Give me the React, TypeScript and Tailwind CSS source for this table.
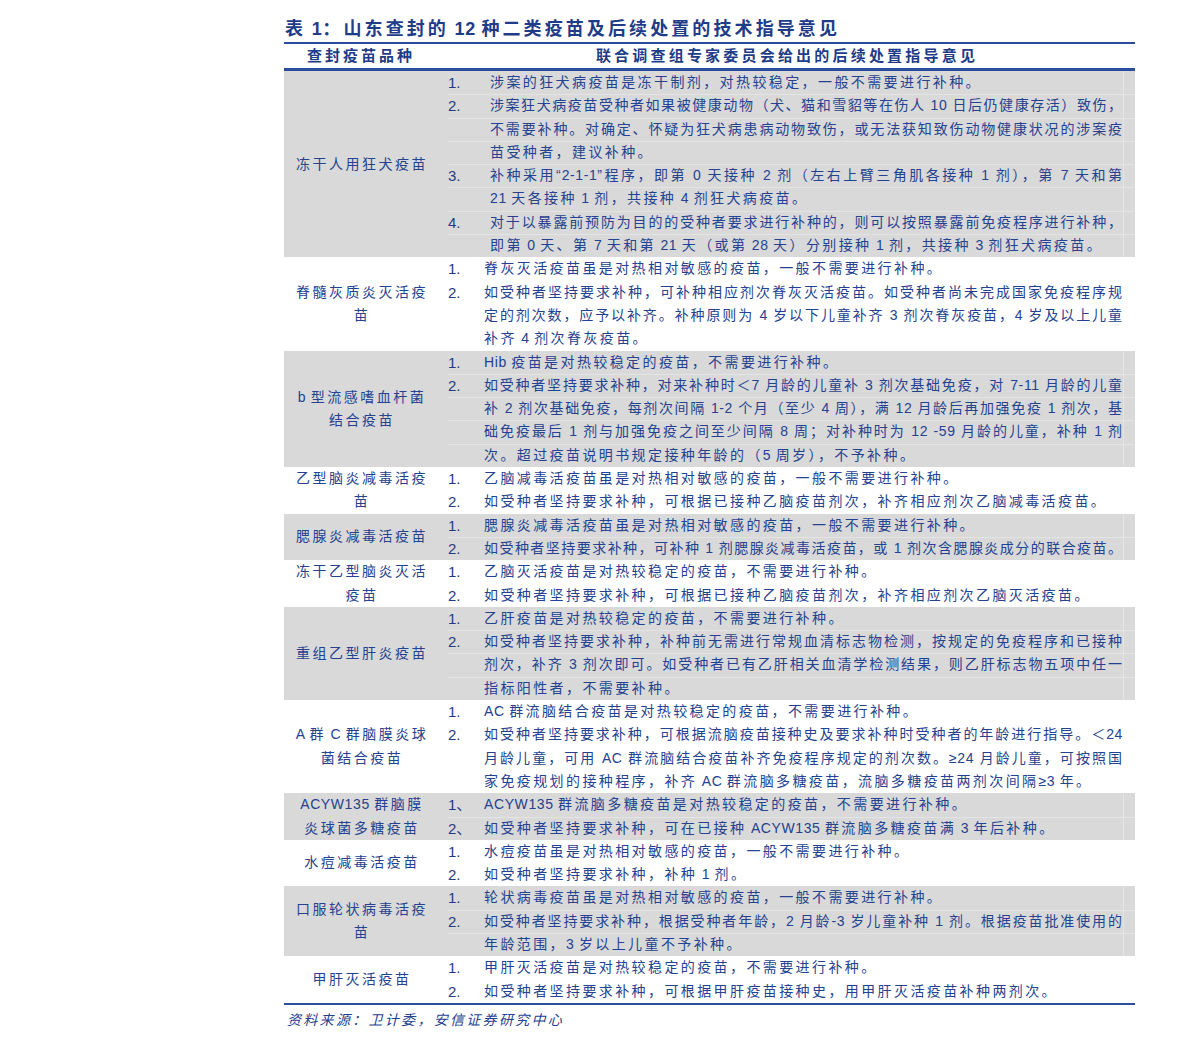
import clsx from "clsx";

type Item = { n: string; lines: string[]; full?: boolean };
type Row = { name: string[]; gray?: boolean; wide?: boolean; items: Item[] };

const rows: Row[] = [
  {
    name: ["冻干人用狂犬疫苗"],
    gray: true,
    wide: true,
    items: [
      { n: "1.", lines: ["涉案的狂犬病疫苗是冻干制剂，对热较稳定，一般不需要进行补种。"] },
      {
        n: "2.",
        lines: [
          "涉案狂犬病疫苗受种者如果被健康动物（犬、猫和雪貂等在伤人 10 日后仍健康存活）致伤，",
          "不需要补种。对确定、怀疑为狂犬病患病动物致伤，或无法获知致伤动物健康状况的涉案疫",
          "苗受种者，建议补种。",
        ],
      },
      {
        n: "3.",
        lines: [
          "补种采用“2-1-1”程序，即第 0 天接种 2 剂（左右上臂三角肌各接种 1 剂），第 7 天和第",
          "21 天各接种 1 剂，共接种 4 剂狂犬病疫苗。",
        ],
      },
      {
        n: "4.",
        lines: [
          "对于以暴露前预防为目的的受种者要求进行补种的，则可以按照暴露前免疫程序进行补种，",
          "即第 0 天、第 7 天和第 21 天（或第 28 天）分别接种 1 剂，共接种 3 剂狂犬病疫苗。",
        ],
      },
    ],
  },
  {
    name: ["脊髓灰质炎灭活疫", "苗"],
    items: [
      { n: "1.", lines: ["脊灰灭活疫苗虽是对热相对敏感的疫苗，一般不需要进行补种。"] },
      {
        n: "2.",
        lines: [
          "如受种者坚持要求补种，可补种相应剂次脊灰灭活疫苗。如受种者尚未完成国家免疫程序规",
          "定的剂次数，应予以补齐。补种原则为 4 岁以下儿童补齐 3 剂次脊灰疫苗，4 岁及以上儿童",
          "补齐 4 剂次脊灰疫苗。",
        ],
      },
    ],
  },
  {
    name: ["b 型流感嗜血杆菌", "结合疫苗"],
    gray: true,
    items: [
      { n: "1.", lines: ["Hib 疫苗是对热较稳定的疫苗，不需要进行补种。"] },
      {
        n: "2.",
        lines: [
          "如受种者坚持要求补种，对来补种时＜7 月龄的儿童补 3 剂次基础免疫，对 7-11 月龄的儿童",
          "补 2 剂次基础免疫，每剂次间隔 1-2 个月（至少 4 周），满 12 月龄后再加强免疫 1 剂次，基",
          "础免疫最后 1 剂与加强免疫之间至少间隔 8 周；对补种时为 12 -59 月龄的儿童，补种 1 剂",
          "次。超过疫苗说明书规定接种年龄的（5 周岁），不予补种。",
        ],
      },
    ],
  },
  {
    name: ["乙型脑炎减毒活疫", "苗"],
    items: [
      { n: "1.", lines: ["乙脑减毒活疫苗虽是对热相对敏感的疫苗，一般不需要进行补种。"] },
      { n: "2.", lines: ["如受种者坚持要求补种，可根据已接种乙脑疫苗剂次，补齐相应剂次乙脑减毒活疫苗。"] },
    ],
  },
  {
    name: ["腮腺炎减毒活疫苗"],
    gray: true,
    items: [
      { n: "1.", lines: ["腮腺炎减毒活疫苗虽是对热相对敏感的疫苗，一般不需要进行补种。"] },
      {
        n: "2.",
        full: true,
        lines: ["如受种者坚持要求补种，可补种 1 剂腮腺炎减毒活疫苗，或 1 剂次含腮腺炎成分的联合疫苗。"],
      },
    ],
  },
  {
    name: ["冻干乙型脑炎灭活", "疫苗"],
    items: [
      { n: "1.", lines: ["乙脑灭活疫苗是对热较稳定的疫苗，不需要进行补种。"] },
      { n: "2.", lines: ["如受种者坚持要求补种，可根据已接种乙脑疫苗剂次，补齐相应剂次乙脑灭活疫苗。"] },
    ],
  },
  {
    name: ["重组乙型肝炎疫苗"],
    gray: true,
    items: [
      { n: "1.", lines: ["乙肝疫苗是对热较稳定的疫苗，不需要进行补种。"] },
      {
        n: "2.",
        lines: [
          "如受种者坚持要求补种，补种前无需进行常规血清标志物检测，按规定的免疫程序和已接种",
          "剂次，补齐 3 剂次即可。如受种者已有乙肝相关血清学检测结果，则乙肝标志物五项中任一",
          "指标阳性者，不需要补种。",
        ],
      },
    ],
  },
  {
    name: ["A 群 C 群脑膜炎球", "菌结合疫苗"],
    items: [
      { n: "1.", lines: ["AC 群流脑结合疫苗是对热较稳定的疫苗，不需要进行补种。"] },
      {
        n: "2.",
        lines: [
          "如受种者坚持要求补种，可根据流脑疫苗接种史及要求补种时受种者的年龄进行指导。＜24",
          "月龄儿童，可用 AC 群流脑结合疫苗补齐免疫程序规定的剂次数。≥24 月龄儿童，可按照国",
          "家免疫规划的接种程序，补齐 AC 群流脑多糖疫苗，流脑多糖疫苗两剂次间隔≥3 年。",
        ],
      },
    ],
  },
  {
    name: ["ACYW135 群脑膜", "炎球菌多糖疫苗"],
    gray: true,
    items: [
      { n: "1、", lines: ["ACYW135 群流脑多糖疫苗是对热较稳定的疫苗，不需要进行补种。"] },
      { n: "2、", lines: ["如受种者坚持要求补种，可在已接种 ACYW135 群流脑多糖疫苗满 3 年后补种。"] },
    ],
  },
  {
    name: ["水痘减毒活疫苗"],
    items: [
      { n: "1.", lines: ["水痘疫苗虽是对热相对敏感的疫苗，一般不需要进行补种。"] },
      { n: "2.", lines: ["如受种者坚持要求补种，补种 1 剂。"] },
    ],
  },
  {
    name: ["口服轮状病毒活疫", "苗"],
    gray: true,
    items: [
      { n: "1.", lines: ["轮状病毒疫苗虽是对热相对敏感的疫苗，一般不需要进行补种。"] },
      {
        n: "2.",
        lines: [
          "如受种者坚持要求补种，根据受种者年龄，2 月龄-3 岁儿童补种 1 剂。根据疫苗批准使用的",
          "年龄范围，3 岁以上儿童不予补种。",
        ],
      },
    ],
  },
  {
    name: ["甲肝灭活疫苗"],
    items: [
      { n: "1.", lines: ["甲肝灭活疫苗是对热较稳定的疫苗，不需要进行补种。"] },
      { n: "2.", lines: ["如受种者坚持要求补种，可根据甲肝疫苗接种史，用甲肝灭活疫苗补种两剂次。"] },
    ],
  },
];

// latin runs (with the spaces round them) keep near-normal spacing, only CJK is tracked out
function T({ s }: { s: string }) {
  const parts = s.split(/([A-Za-z0-9.\-≥ ]+)/);
  return (
    <>
      {parts.map((p, i) =>
        i % 2 === 1 ? (
          <span key={i} className="tracking-[0.6px]">
            {p}
          </span>
        ) : (
          p
        )
      )}
    </>
  );
}

function TableRow({ row }: { row: Row }) {
  return (
    <div className={clsx("flex", row.gray ? "bg-[#d9d9d9]" : "bg-white")}>
      <div className="flex w-[164px] shrink-0 flex-col items-center justify-center pr-[8px]">
        {row.name.map((l) => (
          <div key={l} className="whitespace-nowrap text-[14px] leading-[23.3px] tracking-[2.5px]">
            <T s={l} />
          </div>
        ))}
      </div>
      <div className="flex flex-1 flex-col">
        {row.items.map((it, i) =>
          it.lines.map((ln, j) => {
            const last = j === it.lines.length - 1;
            const justify = !last || it.full;
            return (
              <div
                key={`${i}-${j}`}
                className={clsx(
                  "flex h-[23.3px] items-center",
                  row.gray && (i > 0 || j > 0) && "shadow-[inset_0_1px_0_#e4e4e4]"
                )}
              >
                <span
                  className={clsx(
                    "shrink-0 text-[15px] leading-[23.3px] text-[#1f3c88]",
                    row.wide ? "w-[42px]" : "w-[36px]"
                  )}
                >
                  {j === 0 ? it.n : ""}
                </span>
                <span
                  className={clsx(
                    "block whitespace-nowrap text-[14px] leading-[23.3px]",
                    row.wide ? "w-[633px]" : "w-[639px]",
                    justify
                      ? "text-justify tracking-[1px] [text-align-last:justify]"
                      : "tracking-[2.4px]"
                  )}
                >
                  <T s={ln} />
                </span>
                <span
                  className={clsx(
                    "ml-auto h-full w-[12px] shrink-0",
                    row.gray && "border-l border-[#e4e4e4]"
                  )}
                />
              </div>
            );
          })
        )}
      </div>
    </div>
  );
}

export default function App() {
  return (
    <div className="min-h-[1050px] bg-white font-['Liberation_Sans','Noto_Sans_CJK_SC',sans-serif] text-[#24428f]">
      <div className="ml-[284px] w-[851px] pt-[17px]">
        <h1 className="border-b-2 border-[#2c4d9d] pl-px text-[18px] font-bold leading-[25px] tracking-[3.1px] text-[#1f3c88]">
          <T s="表 1：山东查封的 12 种二类疫苗及后续处置的技术指导意见" />
        </h1>
        <div className="flex h-[27px] items-center border-b-[3px] border-[#2c4d9d] text-[15px] font-bold text-[#1f3c88]">
          <div className="w-[164px] pr-[10px] text-center tracking-[3px]">查封疫苗品种</div>
          <div className="flex-1 pr-[13px] pl-[4px] text-center tracking-[3.2px]">
            联合调查组专家委员会给出的后续处置指导意见
          </div>
        </div>
        {rows.map((r) => (
          <TableRow key={r.name.join("")} row={r} />
        ))}
        <div className="border-t-2 border-[#2c4d9d] pl-[3px] pt-[4px] text-[14px] italic leading-[22px] tracking-[2.3px]">
          资料来源：卫计委，安信证券研究中心
        </div>
      </div>
    </div>
  );
}
